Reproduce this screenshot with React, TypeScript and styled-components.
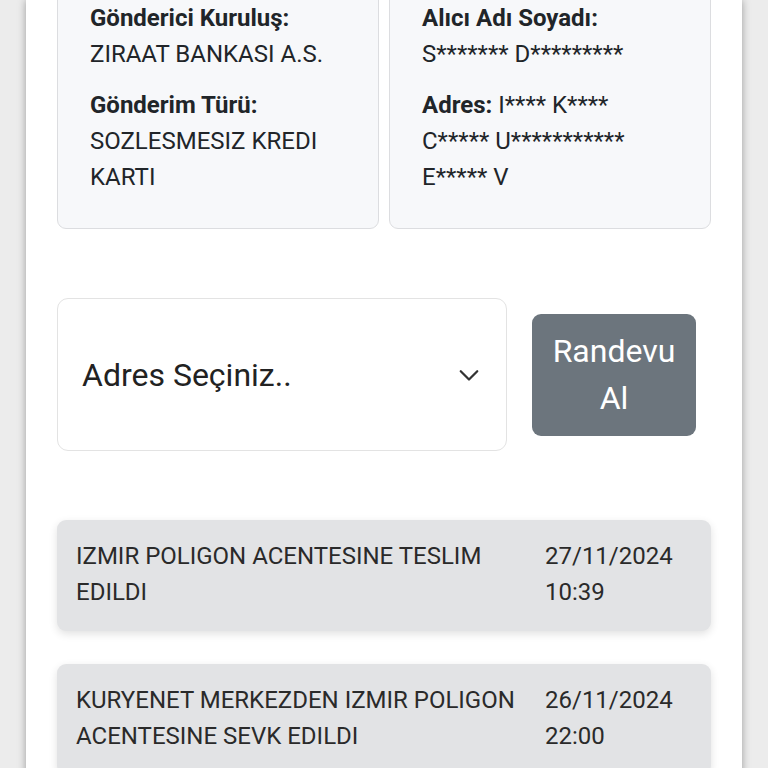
import React from "react";
import styled, { createGlobalStyle } from "styled-components";

const GlobalStyle = createGlobalStyle`
    html, body {
        margin: 0;
        padding: 0;
        background: #ececec;
        font-family: Roboto, "Liberation Sans", sans-serif;
        color: #212529;
        overflow: hidden;
    }
    * {
        box-sizing: border-box;
    }
`;

const Page = styled.div`
    width: 716px;
    min-height: 768px;
    margin: 0 auto;
    background: #ffffff;
    box-shadow: 0 0 8px rgba(0, 0, 0, 0.35);
    padding: 0 31px 40px;
    overflow: hidden;
`;

const InfoRow = styled.div`
    display: grid;
    grid-template-columns: 1fr 1fr;
    gap: 10px;
    margin-top: -35px;
`;

const InfoCard = styled.div`
    background: #f7f8fa;
    border: 1px solid #dcdde0;
    border-radius: 9px;
    padding: 34px 34px 33px 32px;
    font-size: 24px;
    line-height: 36px;
`;

const Field = styled.div`
    margin-bottom: 15px;
    &:last-child {
        margin-bottom: 0;
    }
`;

const Label = styled.span`
    font-weight: 700;
`;

const Value = styled.div``;

const PickRow = styled.div`
    display: flex;
    align-items: center;
    gap: 25px;
    margin-top: 69px;
    padding-right: 15px;
`;

const SelectBox = styled.div`
    flex: 1;
    height: 153px;
    background: #fff;
    border: 1px solid #e3e3e3;
    border-radius: 11px;
    display: flex;
    align-items: center;
    justify-content: space-between;
    padding: 0 25px 0 24px;
    font-size: 32px;
    color: #222;
`;

const Button = styled.button`
    width: 164px;
    height: 122px;
    border: none;
    border-radius: 9px;
    background: #6c757d;
    color: #fff;
    font-family: inherit;
    font-size: 32px;
    line-height: 47px;
    padding: 0 12px;
`;

const Timeline = styled.div`
    display: flex;
    flex-direction: column;
    gap: 33px;
    margin-top: 69px;
`;

const Step = styled.div`
    display: grid;
    grid-template-columns: 450px 1fr;
    column-gap: 19px;
    background: #e2e3e5;
    border-radius: 9px;
    box-shadow: 0 3px 8px rgba(0, 0, 0, 0.12);
    padding: 18px 20px 21px 19px;
    font-size: 24px;
    line-height: 36px;
    color: #2a2a2a;
`;

const StepText = styled.div``;

const StepDate = styled.div``;

const Chevron = () => (
    <svg width="24" height="24" viewBox="0 0 16 16" fill="none" stroke="#333" strokeWidth="1.5" strokeLinecap="round" strokeLinejoin="round">
        <path d="M2.5 5.5l5.5 5.5 5.5-5.5" />
    </svg>
);

const steps = [
    { text: "IZMIR POLIGON ACENTESINE TESLIM EDILDI", date: "27/11/2024", time: "10:39" },
    { text: "KURYENET MERKEZDEN IZMIR POLIGON ACENTESINE SEVK EDILDI", date: "26/11/2024", time: "22:00" },
];

function App() {
    return (
        <>
            <GlobalStyle />
            <Page>
                <InfoRow>
                    <InfoCard>
                        <Field>
                            <Label>Gönderici Kuruluş:</Label>
                            <Value>ZIRAAT BANKASI A.S.</Value>
                        </Field>
                        <Field>
                            <Label>Gönderim Türü:</Label>
                            <Value>SOZLESMESIZ KREDI KARTI</Value>
                        </Field>
                    </InfoCard>
                    <InfoCard>
                        <Field>
                            <Label>Alıcı Adı Soyadı:</Label>
                            <Value>S******* D*********</Value>
                        </Field>
                        <Field>
                            <Label>Adres:</Label> I**** K**** C***** U*********** E***** V
                        </Field>
                    </InfoCard>
                </InfoRow>

                <PickRow>
                    <SelectBox>
                        Adres Seçiniz..
                        <Chevron />
                    </SelectBox>
                    <Button>Randevu Al</Button>
                </PickRow>

                <Timeline>
                    {steps.map((s) => (
                        <Step key={s.date}>
                            <StepText>{s.text}</StepText>
                            <StepDate>
                                {s.date}
                                <br />
                                {s.time}
                            </StepDate>
                        </Step>
                    ))}
                </Timeline>
            </Page>
        </>
    );
}
export default App;
